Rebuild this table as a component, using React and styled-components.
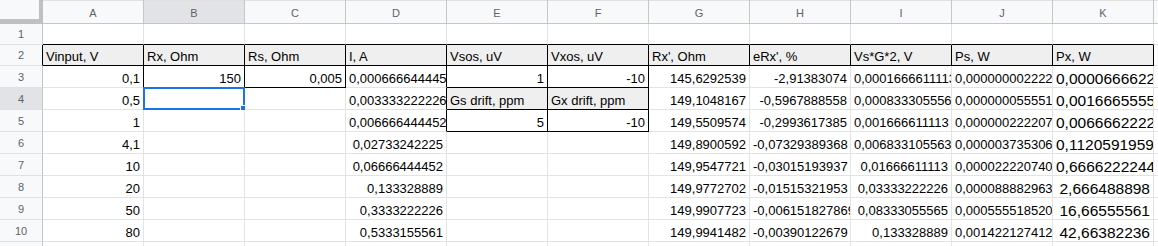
import React from 'react';
import styled, { createGlobalStyle } from 'styled-components';

const GlobalStyle = createGlobalStyle`
  html, body { margin: 0; padding: 0; background: #fff; overflow: hidden; }
  body { font-family: "Liberation Sans", Arial, sans-serif; }
`;

const COLS = ['A', 'B', 'C', 'D', 'E', 'F', 'G', 'H', 'I', 'J', 'K', 'L'];
const GRID = '#e2e3e3';
const HEAD_LINE = '#c4c7c5';
const BLACK = '#000';

const S = (s) => ({ s });

// rows 1..11, columns A..L
const DATA = [
  [],
  [S('Vinput, V'), S('Rx, Ohm'), S('Rs, Ohm'), S('I, A'), S('Vsos, uV'), S('Vxos, uV'), S("Rx', Ohm"), S("eRx', %"), S('Vs*G*2, V'), S('Ps, W'), S('Px, W')],
  ['0,1', '150', '0,005', '0,00066664444523', '1', '-10', '145,6292539', '-2,91383074', '0,00016666111130', '0,0000000022220741', '0,000066662222444'],
  ['0,5', null, null, '0,003333222226', S('Gs drift, ppm'), S('Gx drift, ppm'), '149,1048167', '-0,5967888558', '0,00083330555648', '0,0000000555518520', '0,0016665555611'],
  ['1', null, null, '0,006666444452', '5', '-10', '149,5509574', '-0,2993617385', '0,001666611113', '0,00000022220740', '0,0066662222444'],
  ['4,1', null, null, '0,02733242225', null, null, '149,8900592', '-0,07329389368', '0,006833105563', '0,0000037353065', '0,1120591959'],
  ['10', null, null, '0,06666444452', null, null, '149,9547721', '-0,03015193937', '0,01666611113', '0,000022220740', '0,6666222244'],
  ['20', null, null, '0,133328889', null, null, '149,9772702', '-0,01515321953', '0,03333222226', '0,000088882963', '2,666488898'],
  ['50', null, null, '0,3333222226', null, null, '149,9907723', '-0,0061518278690', '0,08333055565', '0,00055551852040', '16,66555561'],
  ['80', null, null, '0,5333155561', null, null, '149,9941482', '-0,00390122679', '0,133328889', '0,001422127412', '42,66382236'],
  [],
];

const BOXED = new Set([
  ...[0, 1, 2, 3, 4, 5, 6, 7, 8, 9, 10].map((c) => `2,${c}`),
  '3,1', '3,2', '3,4', '3,5',
  '4,4', '4,5',
  '5,4', '5,5',
]);
const FILLED = new Set([
  ...[0, 1, 2, 3, 4, 5, 6, 7, 8, 9, 10].map((c) => `2,${c}`),
  '4,4', '4,5',
]);
const isBoxed = (r, c) => BOXED.has(`${r},${c}`);

const SEL_ROW = 4;
const SEL_COL = 1;

const Sheet = styled.div`
  display: grid;
  grid-template-columns: 43px repeat(12, 101px);
  grid-template-rows: 24px 21px 21px repeat(9, 22px);
  width: max-content;
`;

const Corner = styled.div`
  box-sizing: border-box;
  background: #f8f9fa;
  border-right: 4px solid #c0c0c0;
  border-bottom: 5px solid #c0c0c0;
`;

const ColHead = styled.div`
  box-sizing: border-box;
  display: flex;
  align-items: center;
  justify-content: center;
  background: ${(p) => (p.$selected ? '#e1e3e6' : '#f8f9fa')};
  border-right: 1px solid ${HEAD_LINE};
  border-bottom: 1px solid ${HEAD_LINE};
  box-shadow: inset 0 1px 0 #e0e0e0;
  color: #5f6368;
  font-size: 11px;
  padding-top: 2px;
`;

const RowHead = styled.div`
  box-sizing: border-box;
  display: flex;
  align-items: center;
  justify-content: center;
  background: ${(p) => (p.$selected ? '#e1e3e6' : '#f8f9fa')};
  border-right: 1px solid ${(p) => (p.$edge ? BLACK : HEAD_LINE)};
  border-bottom: 1px solid #e0e0e0;
  color: #5f6368;
  font-size: 11px;
`;

const Cell = styled.div`
  box-sizing: border-box;
  position: relative;
  display: flex;
  align-items: flex-end;
  overflow: ${(p) => (p.$selected ? 'visible' : 'hidden')};
  padding: 0 3px 0 3px;
  background: ${(p) => (p.$fill ? '#efefef' : '#fff')};
  border-right: 1px solid ${(p) => (p.$right ? BLACK : GRID)};
  border-bottom: 1px solid ${(p) => (p.$bottom ? BLACK : GRID)};
  color: #000;
  font-size: ${(p) => (p.$big ? '15.5px' : '13px')};
  line-height: 16px;
`;

const CellText = styled.span`
  flex-shrink: 0;
  white-space: nowrap;
  margin-left: ${(p) => (p.$num ? 'auto' : '0')};
  margin-right: ${(p) => (p.$num ? '0' : 'auto')};
`;

const Clip = styled.div`
  display: flex;
  align-items: flex-end;
  width: 100%;
  height: 100%;
  overflow: hidden;
`;

const Selection = styled.div`
  position: absolute;
  top: -1px;
  left: -1px;
  right: -1px;
  bottom: -1px;
  border: 2px solid #1a73e8;
  pointer-events: none;
`;

const Handle = styled.div`
  position: absolute;
  right: -5px;
  bottom: -5px;
  width: 6px;
  height: 6px;
  background: #1a73e8;
  border: 1px solid #fff;
`;

export default function App() {
  const rows = [];
  for (let r = 1; r <= 11; r += 1) {
    rows.push(
      <RowHead key={`rh${r}`} $selected={r === SEL_ROW} $edge={isBoxed(r, 0)}>
        {r <= 10 ? r : ''}
      </RowHead>
    );
    COLS.forEach((col, c) => {
      const v = (DATA[r - 1] || [])[c];
      const right = isBoxed(r, c) || isBoxed(r, c + 1);
      const bottom = isBoxed(r, c) || isBoxed(r + 1, c);
      const selected = r === SEL_ROW && c === SEL_COL;
      let content = null;
      if (v != null) {
        const num = typeof v === 'string';
        content = <CellText $num={num}>{num ? v : v.s}</CellText>;
      }
      rows.push(
        <Cell
          key={`${col}${r}`}
          $right={right}
          $bottom={bottom}
          $fill={FILLED.has(`${r},${c}`)}
          $big={col === 'K' && r >= 3}
          $selected={selected}
        >
          {selected ? (
            <>
              <Clip>{content}</Clip>
              <Selection>
                <Handle />
              </Selection>
            </>
          ) : (
            content
          )}
        </Cell>
      );
    });
  }

  return (
    <>
      <GlobalStyle />
      <Sheet>
        <Corner />
        {COLS.map((col, c) => (
          <ColHead key={col} $selected={c === SEL_COL}>
            {col}
          </ColHead>
        ))}
        {rows}
      </Sheet>
    </>
  );
}
